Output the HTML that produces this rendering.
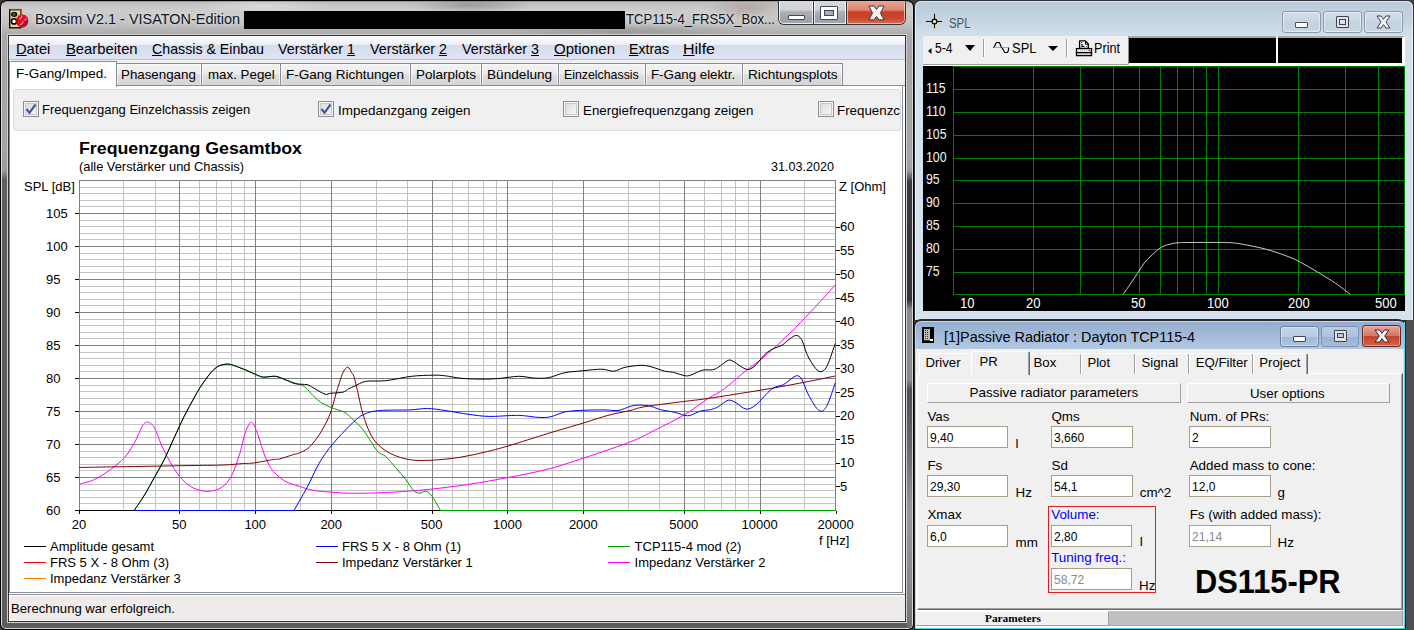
<!DOCTYPE html>
<html><head><meta charset="utf-8"><title>Boxsim</title>
<style>
html,body{margin:0;padding:0;width:1414px;height:630px;overflow:hidden;background:#3c3c3c}
.b{position:absolute;box-sizing:border-box}
.t{position:absolute;white-space:nowrap;line-height:1;font-family:"Liberation Sans", sans-serif;transform-origin:0 0}
svg{position:absolute;overflow:visible}
u{text-decoration:underline;text-underline-offset:1px}
</style></head><body>
<div class="b" style="left:0px;top:0px;width:914px;height:630px;background:#000;border-radius:7px 7px 6px 6px"></div><div class="b" style="left:1px;top:1px;width:912px;height:628px;background:linear-gradient(180deg,#bdbdbd 0px,#cdcdcd 8px,#c4c4c4 20px,#a9a9a9 34px,#a5a5a5 60px,#a3a3a3 150px,#9c9c9c 168px,#5f5f5f 178px,#5c5c5c 300px,#5d5d5d 629px);border:1px solid #d8d8d8;border-top-color:#9a9a9a;border-radius:6px 6px 5px 5px"></div><div class="b" style="left:907px;top:150px;width:5px;height:478px;background:linear-gradient(180deg,#a8a8a8 0px,#a0a0a0 20px,#3a3a3a 32px,#353535 150px,#8a8a8a 160px,#8a8a8a 230px,#505050 240px,#6a6a6a 300px,#999 360px,#888 440px,#707070 478px);border-radius:0 0 4px 0"></div><div class="b" style="left:1px;top:1px;width:912px;height:33px;background:radial-gradient(ellipse 60px 8px at 470px 4px,rgba(80,80,80,0.35),transparent),radial-gradient(ellipse 80px 7px at 260px 5px,rgba(255,255,255,0.35),transparent),radial-gradient(ellipse 40px 10px at 745px 8px,rgba(120,60,60,0.25),transparent),radial-gradient(ellipse 120px 8px at 620px 30px,rgba(90,90,90,0.25),transparent);border-radius:6px 6px 0 0"></div><div class="b" style="left:7px;top:34px;width:900px;height:589px;border:1px solid #d0d0d0"></div><div class="b" style="left:8px;top:35px;width:898px;height:587px;border:1px solid #333;background:#fff"></div><svg style="left:9px;top:9px" width="20" height="20" viewBox="0 0 20 20">
<rect x="0.7" y="0.6" width="11" height="18.2" fill="#e8d88e" stroke="#000" stroke-width="1.3"/>
<path d="M1 0.6H11.7V6" fill="none" stroke="#8a4010" stroke-width="1.3"/>
<ellipse cx="5.2" cy="5.3" rx="3.2" ry="2.6" fill="#111"/><path d="M3.8 4.8H6.2M3.8 6H6.2" stroke="#bbb" stroke-width="0.6"/>
<circle cx="5" cy="12.4" r="2.6" fill="#fff" stroke="#000" stroke-width="1.6"/>
<path d="M13 5.3 L16.5 6.2 L19 9 L19.3 12.5 L18 16 L15 18.3 L11.5 18.5 L8.5 16.5 L7 13 L7.5 9.5 L9.5 6.5Z" fill="#e0102c"/>
<path d="M19.3 12.5 L18 16 L15 18.3 L11.5 18.5 L14 14 L17.5 10Z" fill="#b0102a"/>
<g fill="#fff"><rect x="12.2" y="6.8" width="1" height="1"/><rect x="10.5" y="9.2" width="1" height="1"/><rect x="11.6" y="8.4" width="1" height="1"/><rect x="15.5" y="10.5" width="1" height="1"/><rect x="16.5" y="9.6" width="1" height="1"/><rect x="13.5" y="12.5" width="1" height="1"/><rect x="11.5" y="15" width="1" height="1"/><rect x="12.5" y="14" width="1" height="1"/></g>
<rect x="7.5" y="11.8" width="1" height="1" fill="#000"/>
</svg><div class="t" style="left:35px;top:10.80px;font-size:15px;color:#101828;transform:scaleX(0.9631);text-shadow:0 0 5px rgba(255,255,255,0.8)">Boxsim V2.1 - VISATON-Edition</div><div class="b" style="left:244px;top:11px;width:381px;height:18px;background:#000"></div><div class="t" style="left:626px;top:10.80px;font-size:15px;color:#101828;transform:scaleX(0.8732);text-shadow:0 0 5px rgba(255,255,255,0.8)">TCP115-4_FRS5X_Box...</div><div class="b" style="left:778px;top:0px;width:128px;height:25px;background:#33363d;border-radius:0 0 6px 6px"></div><div class="b" style="left:779px;top:0px;width:34px;height:24px;background:linear-gradient(180deg,#d8dadd 0px,#cfd1d4 10px,#abaeb3 12px,#9ea2aa 21px,#a8acb4 24px);border-radius:0 0 0 5px;box-shadow:inset 0 0 0 1px rgba(255,255,255,0.75)"></div><div class="b" style="left:814px;top:0px;width:32px;height:24px;background:linear-gradient(180deg,#d8dadd 0px,#cfd1d4 10px,#abaeb3 12px,#9ea2aa 21px,#a8acb4 24px);box-shadow:inset 0 0 0 1px rgba(255,255,255,0.75)"></div><div class="b" style="left:847px;top:0px;width:58px;height:24px;background:linear-gradient(180deg,#eba898 0px,#dc8672 10px,#c83f24 12px,#c84a30 19px,#d87058 24px);border-radius:0 0 5px 0;box-shadow:inset 0 0 0 1px rgba(255,210,200,0.7)"></div><div class="b" style="left:778px;top:0px;width:128px;height:1px;background:#000"></div><div class="b" style="left:788px;top:15px;width:17px;height:5px;background:#fff;border:1px solid #404860;border-radius:1px"></div><div class="b" style="left:820px;top:6px;width:18px;height:14px;border:1px solid #404860;background:#fff;border-radius:1px"></div><div class="b" style="left:824px;top:10px;width:10px;height:6px;border:1px solid #404860;background:#a9acb2"></div><svg style="left:868px;top:5px" width="17" height="16" viewBox="0 0 17 16"><path d="M1 1H6L8.5 4.5L11 1H16L12.5 8L16 14.8H11L8.5 11.5L6 14.8H1L4.5 8Z" fill="#f2f2f2" stroke="#3a4050" stroke-width="1" stroke-linejoin="round"/></svg><div class="b" style="left:9px;top:36px;width:896px;height:24px;background:linear-gradient(180deg,#fdfdfe 0px,#eceff7 9px,#d5daed 9px,#dfe4f3 23px);border-bottom:1px solid #b8bfd3"></div><div class="b" style="left:9px;top:60px;width:896px;height:25px;background:#f0f0f0"></div><div class="t" style="left:16px;top:42.13px;font-size:14.5px;color:#000;transform:scaleX(1.0133);"><u>D</u>atei</div><div class="t" style="left:66px;top:42.13px;font-size:14.5px;color:#000;transform:scaleX(1.0208);"><u>B</u>earbeiten</div><div class="t" style="left:152px;top:42.13px;font-size:14.5px;color:#000;transform:scaleX(0.9786);"><u>C</u>hassis &amp; Einbau</div><div class="t" style="left:278px;top:42.13px;font-size:14.5px;color:#000;transform:scaleX(0.9850);">Verstärker <u>1</u></div><div class="t" style="left:370px;top:42.13px;font-size:14.5px;color:#000;transform:scaleX(0.9850);">Verstärker <u>2</u></div><div class="t" style="left:462px;top:42.13px;font-size:14.5px;color:#000;transform:scaleX(0.9850);">Verstärker <u>3</u></div><div class="t" style="left:554px;top:42.13px;font-size:14.5px;color:#000;transform:scaleX(1.0365);"><u>O</u>ptionen</div><div class="t" style="left:629px;top:42.13px;font-size:14.5px;color:#000;transform:scaleX(0.9734);"><u>E</u>xtras</div><div class="t" style="left:683px;top:42.13px;font-size:14.5px;color:#000;transform:scaleX(1.1031);"><u>H</u>ilfe</div><div class="b" style="left:116px;top:63px;width:86px;height:23px;background:linear-gradient(180deg,#f3f3f3 0%,#ebebeb 45%,#dddddd 50%,#d5d5d5 100%);border:1px solid #8a8c93;border-bottom:none;box-shadow:inset 0 0 0 1px rgba(255,255,255,0.6)"></div><div class="t" style="left:120.5px;top:68.40px;font-size:13px;color:#000;transform:scaleX(1.0245);">Phasengang</div><div class="b" style="left:201px;top:63px;width:80px;height:23px;background:linear-gradient(180deg,#f3f3f3 0%,#ebebeb 45%,#dddddd 50%,#d5d5d5 100%);border:1px solid #8a8c93;border-bottom:none;box-shadow:inset 0 0 0 1px rgba(255,255,255,0.6)"></div><div class="t" style="left:208px;top:68.40px;font-size:13px;color:#000;transform:scaleX(1.0256);">max. Pegel</div><div class="b" style="left:280px;top:63px;width:131px;height:23px;background:linear-gradient(180deg,#f3f3f3 0%,#ebebeb 45%,#dddddd 50%,#d5d5d5 100%);border:1px solid #8a8c93;border-bottom:none;box-shadow:inset 0 0 0 1px rgba(255,255,255,0.6)"></div><div class="t" style="left:286px;top:68.40px;font-size:13px;color:#000;transform:scaleX(1.0409);">F-Gang Richtungen</div><div class="b" style="left:410px;top:63px;width:72px;height:23px;background:linear-gradient(180deg,#f3f3f3 0%,#ebebeb 45%,#dddddd 50%,#d5d5d5 100%);border:1px solid #8a8c93;border-bottom:none;box-shadow:inset 0 0 0 1px rgba(255,255,255,0.6)"></div><div class="t" style="left:416px;top:68.40px;font-size:13px;color:#000;transform:scaleX(1.0379);">Polarplots</div><div class="b" style="left:481px;top:63px;width:78px;height:23px;background:linear-gradient(180deg,#f3f3f3 0%,#ebebeb 45%,#dddddd 50%,#d5d5d5 100%);border:1px solid #8a8c93;border-bottom:none;box-shadow:inset 0 0 0 1px rgba(255,255,255,0.6)"></div><div class="t" style="left:487px;top:68.40px;font-size:13px;color:#000;transform:scaleX(1.0487);">Bündelung</div><div class="b" style="left:558px;top:63px;width:88px;height:23px;background:linear-gradient(180deg,#f3f3f3 0%,#ebebeb 45%,#dddddd 50%,#d5d5d5 100%);border:1px solid #8a8c93;border-bottom:none;box-shadow:inset 0 0 0 1px rgba(255,255,255,0.6)"></div><div class="t" style="left:564px;top:68.40px;font-size:13px;color:#000;transform:scaleX(0.9485);">Einzelchassis</div><div class="b" style="left:645px;top:63px;width:98px;height:23px;background:linear-gradient(180deg,#f3f3f3 0%,#ebebeb 45%,#dddddd 50%,#d5d5d5 100%);border:1px solid #8a8c93;border-bottom:none;box-shadow:inset 0 0 0 1px rgba(255,255,255,0.6)"></div><div class="t" style="left:651px;top:68.40px;font-size:13px;color:#000;transform:scaleX(1.0222);">F-Gang elektr.</div><div class="b" style="left:742px;top:63px;width:101px;height:23px;background:linear-gradient(180deg,#f3f3f3 0%,#ebebeb 45%,#dddddd 50%,#d5d5d5 100%);border:1px solid #8a8c93;border-bottom:none;box-shadow:inset 0 0 0 1px rgba(255,255,255,0.6)"></div><div class="t" style="left:748px;top:68.40px;font-size:13px;color:#000;transform:scaleX(1.0508);">Richtungsplots</div><div class="b" style="left:9px;top:85px;width:896px;height:1px;background:#8a8c93"></div><div class="b" style="left:9px;top:61px;width:108px;height:26px;background:#fff;border:1px solid #8a8c93;border-bottom:none"></div><div class="t" style="left:16px;top:67.00px;font-size:13px;color:#000;transform:scaleX(1.0409);">F-Gang/Imped.</div><div class="b" style="left:9px;top:86px;width:1px;height:507px;background:#8890a0"></div><div class="b" style="left:9px;top:592px;width:894px;height:1px;background:#8890a0"></div><div class="b" style="left:902px;top:86px;width:1px;height:507px;background:#8890a0"></div><div class="b" style="left:13px;top:89px;width:888px;height:42px;background:#f0f0f0;border:1px solid #d5dde6;border-radius:3px"></div><div class="b" style="left:23px;top:101px;width:16px;height:16px;background:linear-gradient(135deg,#d9d9d9,#fafafa);border:1px solid #8e8f8f;box-shadow:inset 0 0 0 1px #f4f4f4,inset 0 0 0 2px #c9c9c9"></div><svg style="left:23px;top:101px" width="16" height="16" viewBox="0 0 16 16"><path d="M3.5 8 L6.5 11.8 L12.5 3.5" fill="none" stroke="#3d58a6" stroke-width="2.2"/></svg><div class="t" style="left:42px;top:103.30px;font-size:13px;color:#000;">Frequenzgang Einzelchassis zeigen</div><div class="b" style="left:318px;top:101px;width:16px;height:16px;background:linear-gradient(135deg,#d9d9d9,#fafafa);border:1px solid #8e8f8f;box-shadow:inset 0 0 0 1px #f4f4f4,inset 0 0 0 2px #c9c9c9"></div><svg style="left:318px;top:101px" width="16" height="16" viewBox="0 0 16 16"><path d="M3.5 8 L6.5 11.8 L12.5 3.5" fill="none" stroke="#3d58a6" stroke-width="2.2"/></svg><div class="t" style="left:338px;top:103.50px;font-size:13px;color:#000;transform:scaleX(1.0365);">Impedanzgang zeigen</div><div class="b" style="left:563px;top:101px;width:16px;height:16px;background:linear-gradient(135deg,#d9d9d9,#fafafa);border:1px solid #8e8f8f;box-shadow:inset 0 0 0 1px #f4f4f4,inset 0 0 0 2px #c9c9c9"></div><div class="t" style="left:582.6px;top:103.50px;font-size:13px;color:#000;transform:scaleX(1.0250);">Energiefrequenzgang zeigen</div><div class="b" style="left:818px;top:101px;width:16px;height:16px;background:linear-gradient(135deg,#d9d9d9,#fafafa);border:1px solid #8e8f8f;box-shadow:inset 0 0 0 1px #f4f4f4,inset 0 0 0 2px #c9c9c9"></div><div style="position:absolute;left:830px;top:95px;width:70px;height:30px;overflow:hidden"><div class="t" style="left:7px;top:8.50px;font-size:13px;color:#000;transform:scaleX(1.0257);">Frequenzc</div></div><div class="b" style="left:903px;top:86px;width:2px;height:507px;background:#fff"></div><div class="t" style="left:79px;top:139.61px;font-size:17px;color:#000;font-weight:700;transform:scaleX(1.0446);">Frequenzgang Gesamtbox</div><div class="t" style="left:79px;top:160.00px;font-size:13px;color:#000;transform:scaleX(0.9886);">(alle Verstärker und Chassis)</div><div class="t" style="left:771px;top:160.00px;font-size:13px;color:#000;transform:scaleX(0.9683);">31.03.2020</div><div class="t" style="left:24px;top:180.00px;font-size:13px;color:#000;">SPL [dB]</div><div class="t" style="left:839px;top:180.00px;font-size:13px;color:#000;">Z [Ohm]</div><div class="b" style="left:9px;top:593px;width:896px;height:1px;background:#fff"></div><div class="b" style="left:9px;top:594px;width:896px;height:1px;background:#909090"></div><div class="b" style="left:9px;top:595px;width:896px;height:26px;background:#fff"></div><div class="b" style="left:10px;top:596px;width:895px;height:24px;background:#efebea"></div><div class="t" style="left:11px;top:602.00px;font-size:13px;color:#000;transform:scaleX(1.0086);">Berechnung war erfolgreich.</div><svg style="left:0;top:0" width="1414" height="630" viewBox="0 0 1414 630"><g shape-rendering="crispEdges" stroke-width="1"><path d="M79 503.5H836" stroke="#c4c4c4"/><path d="M79 497.5H836" stroke="#c4c4c4"/><path d="M79 490.5H836" stroke="#c4c4c4"/><path d="M79 484.5H836" stroke="#c4c4c4"/><path d="M79 470.5H836" stroke="#c4c4c4"/><path d="M79 464.5H836" stroke="#c4c4c4"/><path d="M79 457.5H836" stroke="#c4c4c4"/><path d="M79 451.5H836" stroke="#c4c4c4"/><path d="M79 437.5H836" stroke="#c4c4c4"/><path d="M79 431.5H836" stroke="#c4c4c4"/><path d="M79 424.5H836" stroke="#c4c4c4"/><path d="M79 418.5H836" stroke="#c4c4c4"/><path d="M79 404.5H836" stroke="#c4c4c4"/><path d="M79 398.5H836" stroke="#c4c4c4"/><path d="M79 391.5H836" stroke="#c4c4c4"/><path d="M79 385.5H836" stroke="#c4c4c4"/><path d="M79 371.5H836" stroke="#c4c4c4"/><path d="M79 365.5H836" stroke="#c4c4c4"/><path d="M79 358.5H836" stroke="#c4c4c4"/><path d="M79 352.5H836" stroke="#c4c4c4"/><path d="M79 338.5H836" stroke="#c4c4c4"/><path d="M79 332.5H836" stroke="#c4c4c4"/><path d="M79 325.5H836" stroke="#c4c4c4"/><path d="M79 319.5H836" stroke="#c4c4c4"/><path d="M79 305.5H836" stroke="#c4c4c4"/><path d="M79 299.5H836" stroke="#c4c4c4"/><path d="M79 292.5H836" stroke="#c4c4c4"/><path d="M79 286.5H836" stroke="#c4c4c4"/><path d="M79 272.5H836" stroke="#c4c4c4"/><path d="M79 266.5H836" stroke="#c4c4c4"/><path d="M79 259.5H836" stroke="#c4c4c4"/><path d="M79 253.5H836" stroke="#c4c4c4"/><path d="M79 239.5H836" stroke="#c4c4c4"/><path d="M79 233.5H836" stroke="#c4c4c4"/><path d="M79 226.5H836" stroke="#c4c4c4"/><path d="M79 220.5H836" stroke="#c4c4c4"/><path d="M79 206.5H836" stroke="#c4c4c4"/><path d="M79 200.5H836" stroke="#c4c4c4"/><path d="M79 193.5H836" stroke="#c4c4c4"/><path d="M79 187.5H836" stroke="#c4c4c4"/><path d="M123.5 180V510" stroke="#c4c4c4"/><path d="M155.5 180V510" stroke="#c4c4c4"/><path d="M199.5 180V510" stroke="#c4c4c4"/><path d="M216.5 180V510" stroke="#c4c4c4"/><path d="M231.5 180V510" stroke="#c4c4c4"/><path d="M244.5 180V510" stroke="#c4c4c4"/><path d="M300.5 180V510" stroke="#c4c4c4"/><path d="M376.5 180V510" stroke="#c4c4c4"/><path d="M407.5 180V510" stroke="#c4c4c4"/><path d="M452.5 180V510" stroke="#c4c4c4"/><path d="M468.5 180V510" stroke="#c4c4c4"/><path d="M483.5 180V510" stroke="#c4c4c4"/><path d="M496.5 180V510" stroke="#c4c4c4"/><path d="M552.5 180V510" stroke="#c4c4c4"/><path d="M628.5 180V510" stroke="#c4c4c4"/><path d="M659.5 180V510" stroke="#c4c4c4"/><path d="M704.5 180V510" stroke="#c4c4c4"/><path d="M721.5 180V510" stroke="#c4c4c4"/><path d="M735.5 180V510" stroke="#c4c4c4"/><path d="M748.5 180V510" stroke="#c4c4c4"/><path d="M804.5 180V510" stroke="#c4c4c4"/><path d="M79 477.5H836" stroke="#808080"/><path d="M79 444.5H836" stroke="#808080"/><path d="M79 411.5H836" stroke="#808080"/><path d="M79 378.5H836" stroke="#808080"/><path d="M79 345.5H836" stroke="#808080"/><path d="M79 312.5H836" stroke="#808080"/><path d="M79 279.5H836" stroke="#808080"/><path d="M79 246.5H836" stroke="#808080"/><path d="M79 213.5H836" stroke="#808080"/><path d="M255.5 180V510" stroke="#808080"/><path d="M331.5 180V510" stroke="#808080"/><path d="M507.5 180V510" stroke="#808080"/><path d="M684.5 180V510" stroke="#808080"/><path d="M583.5 180V510" stroke="#808080"/><path d="M760.5 180V510" stroke="#808080"/><path d="M179.5 180V510" stroke="#808080"/><path d="M432.5 180V510" stroke="#808080"/><path d="M79.5 180.5H835.5V510.5" fill="none" stroke="#808080"/><path d="M79.5 180V511" stroke="#808080"/><path d="M79 510.5H836" stroke="#000"/><path d="M75 510.5H79" stroke="#000"/><path d="M75 477.5H79" stroke="#000"/><path d="M75 444.5H79" stroke="#000"/><path d="M75 411.5H79" stroke="#000"/><path d="M75 378.5H79" stroke="#000"/><path d="M75 345.5H79" stroke="#000"/><path d="M75 312.5H79" stroke="#000"/><path d="M75 279.5H79" stroke="#000"/><path d="M75 246.5H79" stroke="#000"/><path d="M75 213.5H79" stroke="#000"/><path d="M836 486.5H840" stroke="#000"/><path d="M836 463.5H840" stroke="#000"/><path d="M836 439.5H840" stroke="#000"/><path d="M836 416.5H840" stroke="#000"/><path d="M836 392.5H840" stroke="#000"/><path d="M836 368.5H840" stroke="#000"/><path d="M836 345.5H840" stroke="#000"/><path d="M836 321.5H840" stroke="#000"/><path d="M836 298.5H840" stroke="#000"/><path d="M836 274.5H840" stroke="#000"/><path d="M836 250.5H840" stroke="#000"/><path d="M836 227.5H840" stroke="#000"/><path d="M79.5 511V514" stroke="#000"/><path d="M179.5 511V514" stroke="#000"/><path d="M255.5 511V514" stroke="#000"/><path d="M331.5 511V514" stroke="#000"/><path d="M432.5 511V514" stroke="#000"/><path d="M507.5 511V514" stroke="#000"/><path d="M583.5 511V514" stroke="#000"/><path d="M684.5 511V514" stroke="#000"/><path d="M760.5 511V514" stroke="#000"/><path d="M836.5 511V514" stroke="#000"/></g><g fill="none" stroke-width="1" stroke-linejoin="round"><path d="M440 510.5H835.5" stroke="#00a000" stroke-width="1" shape-rendering="crispEdges"/><path d="M134 510.5H294.5" stroke="#0000ff" stroke-width="1" shape-rendering="crispEdges"/><path d="M79.0 484.3 C81.5 483.5 89.7 481.8 94.8 479.4 C99.9 477.0 105.9 472.9 110.7 469.4 C115.5 465.9 120.8 461.8 124.6 457.5 C128.4 453.2 131.6 447.8 134.5 442.7 C137.4 437.6 140.3 429.1 142.5 425.8 C144.7 422.5 146.1 421.9 148.0 422.2 C149.9 422.5 152.1 423.8 154.4 427.8 C156.7 431.8 159.5 441.0 162.3 447.0 C165.1 453.0 169.0 460.3 172.2 465.5 C175.4 470.7 178.6 475.8 182.1 479.4 C185.6 483.0 189.9 486.4 194.0 488.3 C198.1 490.2 203.5 491.5 207.9 491.3 C212.3 491.1 218.0 489.8 221.8 487.3 C225.6 484.8 228.8 480.8 231.7 475.4 C234.6 470.0 237.5 460.6 239.7 453.6 C241.9 446.6 243.7 436.7 245.6 431.7 C247.5 426.7 249.7 421.9 251.6 422.2 C253.5 422.5 255.3 428.1 257.5 433.7 C259.7 439.3 263.0 451.5 265.5 457.5 C268.0 463.5 270.2 467.6 273.4 471.4 C276.6 475.2 281.2 478.9 285.3 481.3 C289.4 483.7 294.8 484.9 299.2 486.3 C303.6 487.7 307.7 489.3 313.1 490.3 C318.5 491.3 326.3 491.8 333.0 492.3 C339.7 492.8 345.9 493.3 355.0 493.3 C364.1 493.3 377.8 492.9 389.7 492.3 C401.6 491.7 416.7 490.6 429.4 489.3 C442.1 488.0 456.3 486.2 469.0 484.3 C481.7 482.4 496.0 479.8 508.7 477.4 C521.4 475.0 536.3 472.1 548.4 469.0 C560.5 465.9 571.0 462.2 584.1 457.9 C597.2 453.6 618.7 446.4 630.0 442.0 C641.3 437.6 646.1 434.6 654.8 430.2 C663.5 425.8 675.9 419.8 684.5 414.7 C693.1 409.6 701.9 402.5 708.3 398.4 C714.7 394.3 718.5 393.1 724.2 388.9 C729.9 384.7 738.3 376.8 744.0 372.2 C749.7 367.6 754.8 364.4 759.9 360.3 C765.0 356.2 770.1 351.6 775.8 346.4 C781.5 341.2 789.2 334.0 795.6 327.6 C802.0 321.2 809.1 313.5 815.5 306.7 C821.9 299.9 832.1 288.4 835.3 284.9" stroke="#ff00ff"/><path d="M79.0 467.5 C87.9 467.3 116.1 466.8 134.5 466.5 C152.9 466.2 179.7 465.7 194.0 465.5 C208.3 465.3 215.8 465.3 223.8 465.0 C231.8 464.7 238.9 463.8 243.7 463.5 C248.5 463.2 248.8 463.6 253.6 463.0 C258.4 462.4 269.3 460.1 273.4 459.5 C277.5 458.9 276.2 459.8 279.4 459.0 C282.6 458.2 290.1 455.6 293.3 454.6 C296.5 453.6 296.7 454.2 299.2 453.0 C301.7 451.8 305.9 450.3 309.1 447.4 C312.3 444.5 316.1 439.2 319.0 435.0 C321.9 430.8 324.9 425.3 327.0 421.0 C329.1 416.7 330.4 412.9 332.0 408.0 C333.6 403.1 335.2 396.2 336.9 390.6 C338.6 385.0 341.2 376.5 342.9 372.8 C344.6 369.1 346.4 367.2 347.8 367.2 C349.2 367.2 350.8 371.3 351.8 372.8 C352.8 374.3 353.0 373.5 354.0 376.7 C355.0 379.9 356.6 387.2 357.9 392.6 C359.2 398.0 360.3 404.8 361.9 410.5 C363.5 416.2 365.7 423.2 367.9 428.3 C370.1 433.4 372.3 438.2 375.8 442.2 C379.3 446.2 384.3 450.3 389.7 453.1 C395.1 455.9 402.5 458.6 409.5 459.7 C416.5 460.8 425.0 460.5 433.3 460.1 C441.6 459.7 452.8 458.4 461.1 457.1 C469.4 455.8 477.3 453.9 484.9 452.1 C492.5 450.3 498.5 448.8 508.7 445.8 C518.9 442.8 536.3 437.0 548.4 433.3 C560.5 429.6 574.6 425.7 584.1 422.8 C593.6 419.9 600.6 417.4 607.9 415.4 C615.2 413.4 624.1 411.9 630.0 410.5 C635.9 409.1 636.1 408.2 644.8 406.7 C653.5 405.2 674.3 402.7 684.5 401.4 C694.7 400.1 696.2 400.2 708.3 398.4 C720.4 396.6 745.3 392.7 759.9 390.3 C774.5 387.9 787.5 385.5 799.6 383.2 C811.7 380.9 829.6 377.2 835.3 376.0" stroke="#800000"/><path d="M134.5 510.0 C136.1 507.6 141.2 500.4 144.4 495.2 C147.6 490.0 151.2 483.1 154.4 477.4 C157.6 471.7 161.1 465.9 164.3 459.5 C167.5 453.1 171.0 444.6 174.2 437.7 C177.4 430.8 180.9 422.9 184.1 416.5 C187.3 410.1 191.5 402.6 194.0 398.0 C196.5 393.4 197.5 391.6 200.0 387.7 C202.5 383.8 207.0 377.2 209.9 373.8 C212.8 370.4 215.4 367.9 217.9 366.4 C220.4 364.9 223.6 364.5 225.8 364.2 C228.0 363.9 228.8 364.0 231.7 364.8 C234.6 365.6 239.9 367.7 243.7 369.2 C247.5 370.7 252.4 373.1 255.6 374.4 C258.8 375.7 260.3 376.8 263.5 377.1 C266.7 377.4 271.9 375.9 275.4 376.3 C278.9 376.7 282.1 378.6 285.3 379.7 C288.5 380.8 292.7 382.4 295.2 383.2 C297.7 384.0 299.2 384.2 301.0 385.0 C302.8 385.8 304.3 386.3 306.2 388.0 C308.1 389.7 310.7 393.3 313.1 395.6 C315.5 397.9 318.1 400.6 321.0 402.5 C323.9 404.4 327.2 405.9 331.0 407.5 C334.8 409.1 341.2 410.4 344.8 412.5 C348.4 414.6 351.1 417.9 353.8 420.4 C356.5 422.9 359.3 425.2 361.9 428.3 C364.5 431.4 367.3 436.0 369.8 439.7 C372.3 443.4 375.3 448.9 377.8 451.6 C380.3 454.3 382.9 454.0 385.7 456.5 C388.5 459.0 392.4 463.8 395.6 467.5 C398.8 471.2 402.7 475.8 405.6 479.4 C408.5 483.0 411.3 488.1 413.5 490.3 C415.7 492.5 417.5 493.1 419.4 493.3 C421.3 493.5 423.5 491.0 425.4 491.3 C427.3 491.6 428.9 492.2 431.3 495.2 C433.7 498.2 438.9 507.6 440.3 510.0" stroke="#00a000"/><path d="M294.2 510.0 C296.3 506.4 303.1 494.7 307.1 487.3 C311.1 479.9 314.9 470.5 319.0 463.5 C323.1 456.5 327.2 450.6 333.0 443.7 C338.8 436.8 349.7 425.4 355.0 420.6 C360.3 415.8 361.9 415.1 365.9 413.5 C369.9 411.9 372.8 411.1 379.8 410.5 C386.8 409.9 401.9 410.2 409.5 409.9 C417.1 409.6 421.7 408.4 427.4 408.5 C433.1 408.6 438.5 409.6 445.2 410.5 C451.9 411.4 462.0 413.5 469.0 414.4 C476.0 415.3 480.9 416.2 488.9 416.4 C496.9 416.6 510.8 415.2 518.7 415.4 C526.6 415.6 533.4 417.2 538.5 417.4 C543.6 417.6 546.3 417.6 550.4 416.8 C554.5 416.0 559.9 413.1 564.3 412.1 C568.7 411.1 571.8 410.9 578.2 410.5 C584.6 410.1 597.6 409.9 604.0 409.9 C610.4 409.9 613.7 411.0 617.9 410.5 C622.1 410.0 627.0 407.3 630.0 406.5 C633.0 405.7 633.9 405.3 636.9 405.2 C639.9 405.1 645.0 405.1 648.8 405.8 C652.6 406.5 656.6 408.7 660.7 409.7 C664.8 410.7 670.8 411.4 674.6 412.3 C678.4 413.2 682.0 414.8 684.5 415.3 C687.0 415.8 688.0 416.0 690.5 415.3 C693.0 414.6 697.2 412.0 700.4 411.1 C703.6 410.2 707.4 410.4 710.3 409.7 C713.2 409.0 715.4 408.2 718.3 406.7 C721.2 405.2 725.4 400.8 728.2 400.2 C731.0 399.6 733.3 401.4 736.1 402.8 C738.9 404.2 742.8 408.8 746.0 409.1 C749.2 409.4 751.9 408.0 756.0 404.8 C760.1 401.6 767.4 392.1 771.8 388.9 C776.2 385.7 779.9 386.6 783.7 384.5 C787.5 382.4 792.7 376.9 795.6 376.0 C798.5 375.1 799.7 376.3 801.6 379.0 C803.5 381.7 805.3 388.5 807.5 392.9 C809.7 397.3 813.3 403.8 815.5 406.7 C817.7 409.6 819.5 411.6 821.4 411.3 C823.3 411.0 825.2 409.3 827.4 404.8 C829.6 400.3 834.0 386.4 835.3 382.9" stroke="#0000ff"/><path d="M134.5 510.0 C136.1 507.6 141.2 500.4 144.4 495.2 C147.6 490.0 151.2 483.1 154.4 477.4 C157.6 471.7 161.1 465.9 164.3 459.5 C167.5 453.1 171.0 444.6 174.2 437.7 C177.4 430.8 180.9 422.9 184.1 416.5 C187.3 410.1 191.5 402.6 194.0 398.0 C196.5 393.4 197.5 391.6 200.0 387.7 C202.5 383.8 207.0 377.2 209.9 373.8 C212.8 370.4 215.4 367.9 217.9 366.4 C220.4 364.9 223.6 364.5 225.8 364.2 C228.0 363.9 228.8 364.0 231.7 364.8 C234.6 365.6 239.9 367.7 243.7 369.2 C247.5 370.7 252.4 373.1 255.6 374.4 C258.8 375.7 260.3 376.8 263.5 377.1 C266.7 377.4 271.9 375.9 275.4 376.3 C278.9 376.7 282.1 378.5 285.3 379.7 C288.5 380.9 291.7 382.9 295.2 383.7 C298.7 384.5 304.2 384.1 307.1 384.7 C310.0 385.3 310.2 386.2 313.1 387.7 C316.0 389.2 322.1 393.3 325.0 394.2 C327.9 395.1 328.1 393.5 331.0 393.2 C333.9 392.9 340.1 392.9 342.9 392.2 C345.7 391.5 346.9 389.7 348.8 388.7 C350.7 387.7 352.3 387.2 355.0 386.0 C357.7 384.8 361.0 382.1 365.9 381.3 C370.8 380.5 378.4 381.5 385.7 380.7 C393.0 379.9 403.9 377.2 411.5 376.3 C419.1 375.4 427.9 375.3 433.3 375.2 C438.7 375.1 440.8 375.3 445.2 375.8 C449.6 376.3 455.7 377.8 461.1 378.3 C466.5 378.8 473.3 379.0 479.0 379.1 C484.7 379.2 490.4 379.1 496.8 378.7 C503.2 378.3 512.7 376.4 518.7 376.3 C524.7 376.2 529.7 377.9 534.5 378.1 C539.3 378.3 543.6 378.5 548.4 377.7 C553.2 376.9 558.9 373.9 564.3 372.8 C569.7 371.7 576.1 371.4 582.1 370.8 C588.1 370.2 596.9 369.1 602.0 369.2 C607.1 369.3 610.2 371.5 613.9 371.2 C617.6 370.9 620.7 368.2 625.0 367.3 C629.3 366.4 636.8 365.4 640.9 365.3 C645.0 365.2 647.0 365.8 650.8 366.7 C654.6 367.6 661.2 370.3 664.7 371.2 C668.2 372.1 669.4 371.5 672.6 372.2 C675.8 372.9 681.6 375.1 684.5 375.6 C687.4 376.1 687.6 376.1 690.5 375.2 C693.4 374.3 698.9 371.1 702.4 370.2 C705.9 369.3 709.8 370.3 712.3 369.8 C714.8 369.3 715.8 368.8 718.3 367.3 C720.8 365.8 725.7 361.2 728.2 360.3 C730.7 359.4 731.3 360.5 734.1 361.9 C736.9 363.3 742.8 368.4 746.0 369.2 C749.2 370.0 751.1 368.9 754.0 366.7 C756.9 364.5 761.1 358.2 763.9 355.4 C766.7 352.6 769.0 351.0 771.8 349.4 C774.6 347.8 779.2 346.8 781.7 345.4 C784.2 344.0 785.5 342.1 787.7 340.5 C789.9 338.9 793.4 335.7 795.6 335.5 C797.8 335.3 799.7 336.3 801.6 339.5 C803.5 342.7 805.3 350.8 807.5 355.4 C809.7 360.0 813.3 365.7 815.5 368.3 C817.7 370.9 819.5 372.1 821.4 371.6 C823.3 371.1 825.2 369.8 827.4 365.3 C829.6 360.8 834.0 347.0 835.3 343.5" stroke="#000"/><path d="M79 510.5H135" stroke="#000" stroke-width="1" shape-rendering="crispEdges"/></g><path d="M24 546.5H46" stroke="#000" shape-rendering="crispEdges"/><path d="M316 546.5H338" stroke="#0000ff" shape-rendering="crispEdges"/><path d="M608 546.5H630" stroke="#00a000" shape-rendering="crispEdges"/><path d="M24 562.5H46" stroke="#ff0000" shape-rendering="crispEdges"/><path d="M316 562.5H338" stroke="#800000" shape-rendering="crispEdges"/><path d="M608 562.5H630" stroke="#ff00ff" shape-rendering="crispEdges"/><path d="M24 578.5H46" stroke="#ff8000" shape-rendering="crispEdges"/></svg><div class="t" style="left:46px;top:503.50px;font-size:13px;color:#000;">60</div><div class="t" style="left:46px;top:470.50px;font-size:13px;color:#000;">65</div><div class="t" style="left:46px;top:437.50px;font-size:13px;color:#000;">70</div><div class="t" style="left:46px;top:404.50px;font-size:13px;color:#000;">75</div><div class="t" style="left:46px;top:371.50px;font-size:13px;color:#000;">80</div><div class="t" style="left:46px;top:338.50px;font-size:13px;color:#000;">85</div><div class="t" style="left:46px;top:305.50px;font-size:13px;color:#000;">90</div><div class="t" style="left:46px;top:272.50px;font-size:13px;color:#000;">95</div><div class="t" style="left:46px;top:239.50px;font-size:13px;color:#000;">100</div><div class="t" style="left:46px;top:206.50px;font-size:13px;color:#000;">105</div><div class="t" style="left:840px;top:479.90px;font-size:13px;color:#000;">5</div><div class="t" style="left:840px;top:456.30px;font-size:13px;color:#000;">10</div><div class="t" style="left:840px;top:432.70px;font-size:13px;color:#000;">15</div><div class="t" style="left:840px;top:409.10px;font-size:13px;color:#000;">20</div><div class="t" style="left:840px;top:385.50px;font-size:13px;color:#000;">25</div><div class="t" style="left:840px;top:361.90px;font-size:13px;color:#000;">30</div><div class="t" style="left:840px;top:338.30px;font-size:13px;color:#000;">35</div><div class="t" style="left:840px;top:314.70px;font-size:13px;color:#000;">40</div><div class="t" style="left:840px;top:291.10px;font-size:13px;color:#000;">45</div><div class="t" style="left:840px;top:267.50px;font-size:13px;color:#000;">50</div><div class="t" style="left:840px;top:243.90px;font-size:13px;color:#000;">55</div><div class="t" style="left:840px;top:220.30px;font-size:13px;color:#000;">60</div><div class="t" style="left:71.8px;top:518.00px;font-size:13px;color:#000;">20</div><div class="t" style="left:172.1px;top:518.00px;font-size:13px;color:#000;">50</div><div class="t" style="left:244.4px;top:518.00px;font-size:13px;color:#000;">100</div><div class="t" style="left:320.4px;top:518.00px;font-size:13px;color:#000;">200</div><div class="t" style="left:420.7px;top:518.00px;font-size:13px;color:#000;">500</div><div class="t" style="left:493.0px;top:518.00px;font-size:13px;color:#000;">1000</div><div class="t" style="left:568.9px;top:518.00px;font-size:13px;color:#000;">2000</div><div class="t" style="left:669.3px;top:518.00px;font-size:13px;color:#000;">5000</div><div class="t" style="left:741.6px;top:518.00px;font-size:13px;color:#000;">10000</div><div class="t" style="left:817.5px;top:518.00px;font-size:13px;color:#000;">20000</div><div class="t" style="left:819px;top:533.50px;font-size:13px;color:#000;">f [Hz]</div><div class="t" style="left:50px;top:540.00px;font-size:13px;color:#000;">Amplitude gesamt</div><div class="t" style="left:342px;top:540.00px;font-size:13px;color:#000;">FRS 5 X - 8 Ohm (1)</div><div class="t" style="left:634.6px;top:540.00px;font-size:13px;color:#000;">TCP115-4 mod (2)</div><div class="t" style="left:50px;top:556.00px;font-size:13px;color:#000;">FRS 5 X - 8 Ohm (3)</div><div class="t" style="left:342px;top:556.00px;font-size:13px;color:#000;">Impedanz Verstärker 1</div><div class="t" style="left:634.6px;top:556.00px;font-size:13px;color:#000;">Impedanz Verstärker 2</div><div class="t" style="left:50px;top:572.00px;font-size:13px;color:#000;">Impedanz Verstärker 3</div><div class="b" style="left:914px;top:0px;width:500px;height:321px;background:linear-gradient(180deg,#bccbda 0px,#c6d4e2 20px,#d4e0ec 36px,#d6e2ee 100%);border:1px solid #2e3238;border-radius:7px 7px 0 0"></div><div class="b" style="left:915px;top:1px;width:498px;height:319px;border:1px solid rgba(255,255,255,0.55);border-radius:6px 6px 0 0;border-bottom:none"></div><svg style="left:925px;top:12px" width="18" height="18" viewBox="0 0 18 18"><g shape-rendering="crispEdges" stroke="#000" stroke-width="1"><path d="M9.5 1.5V16.5M1 9.5H17"/></g><circle cx="9.5" cy="9.5" r="2.4" fill="#e8d060" stroke="#000" stroke-width="1.1"/><circle cx="9.5" cy="9.5" r="1" fill="#fff" opacity="0.7"/><g fill="#c8b020"><rect x="9" y="1" width="1" height="1"/><rect x="9" y="16" width="1" height="1"/></g></svg><div class="t" style="left:949px;top:15.10px;font-size:15px;color:#4a5560;transform:scaleX(0.7583);">SPL</div><div class="b" style="left:1282px;top:11px;width:39px;height:22px;background:linear-gradient(180deg,#d2dde8,#c9d6e3 50%,#c3d1df 51%,#cad7e5);border:1px solid #8d9bb0;border-radius:3px;box-shadow:inset 0 0 0 1px rgba(255,255,255,0.45)"></div><div class="b" style="left:1323px;top:11px;width:39px;height:22px;background:linear-gradient(180deg,#d2dde8,#c9d6e3 50%,#c3d1df 51%,#cad7e5);border:1px solid #8d9bb0;border-radius:3px;box-shadow:inset 0 0 0 1px rgba(255,255,255,0.45)"></div><div class="b" style="left:1364px;top:11px;width:39px;height:22px;background:linear-gradient(180deg,#d2dde8,#c9d6e3 50%,#c3d1df 51%,#cad7e5);border:1px solid #8d9bb0;border-radius:3px;box-shadow:inset 0 0 0 1px rgba(255,255,255,0.45)"></div><div class="b" style="left:1295px;top:22px;width:13px;height:6px;background:#fafafa;border:1px solid #4a5060;border-radius:1px"></div><div class="b" style="left:1336px;top:16px;width:13px;height:12px;background:#e2e2e2;border:1px solid #3e4454;border-radius:1px"></div><div class="b" style="left:1339px;top:19px;width:7px;height:6px;background:#d6e6f4;border:1px solid #3e4454"></div><svg style="left:1376px;top:15px" width="15" height="14" viewBox="0 0 15 14"><path d="M1 1H5.2L7.5 4.3L9.8 1H14L10 7L14 13H9.8L7.5 9.7L5.2 13H1L5 7Z" fill="#f4f4f4" stroke="#3e4454" stroke-width="1" stroke-linejoin="round"/></svg><div class="b" style="left:923px;top:36px;width:482px;height:29px;background:#f0f0f0"></div><div class="b" style="left:923px;top:64px;width:205px;height:1px;background:#a0a0a0"></div><div class="b" style="left:923px;top:65px;width:482px;height:1px;background:#fff"></div><svg style="left:928px;top:48px" width="4" height="6" viewBox="0 0 4 6"><path d="M3.5 0V6L0 3Z" fill="#000"/></svg><div class="t" style="left:935px;top:40.95px;font-size:14px;color:#000;transform:scaleX(0.8648);">5-4</div><svg style="left:965px;top:45px" width="10" height="6" viewBox="0 0 10 6"><path d="M0 0H10L5 6Z" fill="#000"/></svg><div class="b" style="left:983px;top:39px;width:1px;height:18px;background:#a0a0a0"></div><div class="b" style="left:984px;top:39px;width:1px;height:18px;background:#fff"></div><svg style="left:992px;top:41px" width="18" height="13" viewBox="0 0 18 13"><path d="M1.3 6.6 L2.6 5.6 L3.4 3.2 L4.5 1.5 H7.2 L8.2 3.2 L9 5.6 L10.2 7 L11.2 8.6 L12 10.3 L12.8 11.5 H15.3 L16.2 10.2 L16.6 8 V6.5" fill="none" stroke="#000" stroke-width="1.15" stroke-linejoin="round"/><path d="M3 6.5H9M11 6.5H16.5" stroke="#777" stroke-width="0.6"/></svg><div class="t" style="left:1011.5px;top:40.95px;font-size:14px;color:#000;transform:scaleX(0.9258);">SPL</div><svg style="left:1048px;top:46px" width="10" height="5" viewBox="0 0 10 5"><path d="M0 0H10L5 5Z" fill="#000"/></svg><div class="b" style="left:1066px;top:39px;width:1px;height:18px;background:#a0a0a0"></div><div class="b" style="left:1067px;top:39px;width:1px;height:18px;background:#fff"></div><svg style="left:1075px;top:40px" width="18" height="17" viewBox="0 0 18 17">
<path d="M4.6 0.9H10.4L13.3 4V8.5H4.6Z" fill="#fff" stroke="#000" stroke-width="1.3" stroke-linejoin="round"/>
<path d="M10.4 1V4.2H13" fill="none" stroke="#000" stroke-width="1"/>
<path d="M6.3 2.6H7.2M6.3 4.6H7.8M6.3 6.4H9.5M11.5 6.4H12" stroke="#000" stroke-width="1.1"/>
<rect x="1.5" y="8.6" width="15" height="4" fill="#fff" stroke="#000" stroke-width="1.3"/>
<path d="M3 10.6H14" stroke="#aaa" stroke-width="1" stroke-dasharray="1 1"/>
<circle cx="14.5" cy="10.5" r="0.8" fill="#f00"/>
<rect x="1.5" y="12.6" width="15" height="3" fill="#d8d8d8" stroke="#000" stroke-width="1.3"/>
</svg><div class="t" style="left:1094px;top:40.95px;font-size:14px;color:#000;transform:scaleX(0.9032);">Print</div><div class="b" style="left:1128px;top:36px;width:148px;height:30px;background:#000;border-left:1px solid #8a8a8a;border-top:2px solid #a8a8a8;border-bottom:3px solid #fff"></div><div class="b" style="left:1276px;top:36px;width:2px;height:30px;background:#fff"></div><div class="b" style="left:1278px;top:36px;width:127px;height:30px;background:#000;border-top:2px solid #a8a8a8;border-bottom:3px solid #fff;border-right:3px solid #fff"></div><div class="b" style="left:923px;top:66px;width:482px;height:245px;background:#000"></div><svg style="left:0;top:0" width="1414" height="630"><g shape-rendering="crispEdges" stroke="#008000"><path d="M953 272.5H1405"/><path d="M953 249.5H1405"/><path d="M953 226.5H1405"/><path d="M953 203.5H1405"/><path d="M953 180.5H1405"/><path d="M953 158.5H1405"/><path d="M953 135.5H1405"/><path d="M953 112.5H1405"/><path d="M953 89.5H1405"/><path d="M1033.5 67V295"/><path d="M1080.5 67V295"/><path d="M1113.5 67V295"/><path d="M1139.5 67V295"/><path d="M1160.5 67V295"/><path d="M1177.5 67V295"/><path d="M1193.5 67V295"/><path d="M1206.5 67V295"/><path d="M1218.5 67V295"/><path d="M1298.5 67V295"/><path d="M1345.5 67V295"/><path d="M1378.5 67V295"/><path d="M953.5 66.5H1404.5V294.5H953.5Z" fill="none"/></g><path d="M1123.0 294.5 C1124.3 292.7 1128.4 286.8 1131.0 283.0 C1133.6 279.2 1136.9 274.2 1139.0 271.0 C1141.1 267.8 1142.5 265.2 1144.4 262.8 C1146.3 260.4 1148.8 258.1 1151.0 256.0 C1153.2 253.9 1156.2 251.0 1158.3 249.4 C1160.4 247.8 1162.3 246.8 1164.0 246.0 C1165.7 245.2 1166.8 244.9 1169.0 244.4 C1171.2 243.9 1174.6 243.1 1178.0 242.8 C1181.4 242.5 1182.4 242.5 1190.0 242.5 C1197.6 242.5 1217.8 242.3 1225.6 242.5 C1233.4 242.7 1234.7 243.0 1239.0 243.6 C1243.3 244.2 1247.8 245.2 1252.2 246.1 C1256.6 247.0 1261.4 247.9 1266.7 249.4 C1272.0 250.9 1280.5 253.7 1285.6 255.6 C1290.7 257.5 1293.1 258.4 1298.3 261.1 C1303.5 263.8 1311.8 268.6 1317.8 272.2 C1323.8 275.8 1330.4 279.8 1335.6 283.3 C1340.8 286.8 1347.7 292.5 1350.0 294.2" fill="none" stroke="#e0e0e0" stroke-width="0.9"/></svg><div class="t" style="left:925.5px;top:263.65px;font-size:14px;color:#f4f4f4;transform:scaleX(0.8800);">75</div><div class="t" style="left:925.5px;top:240.65px;font-size:14px;color:#f4f4f4;transform:scaleX(0.8800);">80</div><div class="t" style="left:925.5px;top:217.65px;font-size:14px;color:#f4f4f4;transform:scaleX(0.8800);">85</div><div class="t" style="left:925.5px;top:194.65px;font-size:14px;color:#f4f4f4;transform:scaleX(0.8800);">90</div><div class="t" style="left:925.5px;top:171.65px;font-size:14px;color:#f4f4f4;transform:scaleX(0.8800);">95</div><div class="t" style="left:925.5px;top:149.65px;font-size:14px;color:#f4f4f4;transform:scaleX(0.8800);">100</div><div class="t" style="left:925.5px;top:126.65px;font-size:14px;color:#f4f4f4;transform:scaleX(0.8800);">105</div><div class="t" style="left:925.5px;top:103.65px;font-size:14px;color:#f4f4f4;transform:scaleX(0.8800);">110</div><div class="t" style="left:925.5px;top:80.65px;font-size:14px;color:#f4f4f4;transform:scaleX(0.8800);">115</div><div class="t" style="left:960px;top:296.15px;font-size:14px;color:#fff;transform:scaleX(0.9300);">10</div><div class="t" style="left:1026px;top:296.15px;font-size:14px;color:#fff;transform:scaleX(0.9300);">20</div><div class="t" style="left:1131px;top:296.15px;font-size:14px;color:#fff;transform:scaleX(0.9300);">50</div><div class="t" style="left:1207px;top:296.15px;font-size:14px;color:#fff;transform:scaleX(0.9300);">100</div><div class="t" style="left:1288px;top:296.15px;font-size:14px;color:#fff;transform:scaleX(0.9300);">200</div><div class="t" style="left:1375px;top:296.15px;font-size:14px;color:#fff;transform:scaleX(0.9300);">500</div><div class="b" style="left:1405px;top:320px;width:9px;height:310px;background:#4f4f4f;border-left:1px solid #111"></div><div class="b" style="left:914px;top:319px;width:491px;height:311px;background:#2a2a2a;border-radius:7px 7px 0 0"></div><div class="b" style="left:915px;top:321px;width:490px;height:309px;background:linear-gradient(180deg,#93adcf 0px,#a2bad8 12px,#b2c9e2 28px,#f0f0f0 28px);border-radius:6px 6px 0 0;border:1px solid #c4d8ec;border-bottom:none"></div><svg style="left:922px;top:327px" width="13" height="16" viewBox="0 0 13 16" shape-rendering="crispEdges">
<rect x="0" y="0" width="12" height="16" fill="#000"/>
<rect x="2" y="2" width="6" height="12" fill="#bbb"/>
<path d="M3 3h1M5 3h1M3 5h1M5 5h1M3 7h1M5 7h1M3 9h1M5 9h1M3 11h1M5 11h1M2 13h8" stroke="#333"/>
<rect x="8" y="12" width="3" height="2" fill="#fff"/>
</svg><div class="t" style="left:943.5px;top:328.80px;font-size:15px;color:#000;transform:scaleX(0.9608);">[1]Passive Radiator : Dayton TCP115-4</div><div class="b" style="left:1280px;top:326px;width:39px;height:21px;background:linear-gradient(180deg,#c3d5ea,#b8cce4 50%,#9fb8d6 51%,#aec4de);border:1px solid #6b7f9e;border-radius:3px;box-shadow:inset 0 0 0 1px rgba(255,255,255,0.4)"></div><div class="b" style="left:1321px;top:326px;width:38px;height:21px;background:linear-gradient(180deg,#b6cbe3,#adc3df 50%,#98b2d3 51%,#a4bcda);border:1px solid #7f93b0;border-radius:3px"></div><div class="b" style="left:1362px;top:325px;width:39px;height:22px;background:linear-gradient(180deg,#e9a596,#d8725e 50%,#c3432d 51%,#d46048);border:1px solid #5f2a20;border-radius:3px;box-shadow:inset 0 0 0 1px rgba(255,200,190,0.5)"></div><div class="b" style="left:1293px;top:336px;width:13px;height:6px;background:#fafafa;border:1px solid #3e4656;border-radius:1px"></div><div class="b" style="left:1334px;top:330px;width:13px;height:12px;background:#e2e2e2;border:1px solid #3e4454;border-radius:1px"></div><div class="b" style="left:1337px;top:333px;width:7px;height:5px;background:#b8cce4;border:1px solid #3e4454"></div><svg style="left:1374px;top:329px" width="16" height="14" viewBox="0 0 16 14"><path d="M1 1H5.5L8 4.3L10.5 1H15L10.7 7L15 13H10.5L8 9.7L5.5 13H1L5.3 7Z" fill="#f4f4f4" stroke="#3a2a2a" stroke-width="1" stroke-linejoin="round"/></svg><div class="b" style="left:916px;top:349px;width:488px;height:261px;background:#f0f0f0"></div><div class="b" style="left:917px;top:373px;width:486px;height:237px;border-left:1px solid #fff;border-top:1px solid #fff;border-right:1px solid #696969;border-bottom:1px solid #696969;box-shadow:inset -1px -1px 0 #a0a0a0"></div><div class="b" style="left:919px;top:353px;width:54px;height:21px;border-left:1px solid #fff;border-top:1px solid #fff;border-right:1px solid #696969;box-shadow:inset -1px 0 0 #a0a0a0;border-radius:2px 2px 0 0;background:#f0f0f0"></div><div class="t" style="left:925.4px;top:356.43px;font-size:13.2px;color:#000;">Driver</div><div class="b" style="left:1029px;top:353px;width:53px;height:21px;border-left:1px solid #fff;border-top:1px solid #fff;border-right:1px solid #696969;box-shadow:inset -1px 0 0 #a0a0a0;border-radius:2px 2px 0 0;background:#f0f0f0"></div><div class="t" style="left:1033.5px;top:356.43px;font-size:13.2px;color:#000;">Box</div><div class="b" style="left:1081px;top:353px;width:55px;height:21px;border-left:1px solid #fff;border-top:1px solid #fff;border-right:1px solid #696969;box-shadow:inset -1px 0 0 #a0a0a0;border-radius:2px 2px 0 0;background:#f0f0f0"></div><div class="t" style="left:1087.4px;top:356.43px;font-size:13.2px;color:#000;">Plot</div><div class="b" style="left:1135px;top:353px;width:55px;height:21px;border-left:1px solid #fff;border-top:1px solid #fff;border-right:1px solid #696969;box-shadow:inset -1px 0 0 #a0a0a0;border-radius:2px 2px 0 0;background:#f0f0f0"></div><div class="t" style="left:1141.5px;top:356.43px;font-size:13.2px;color:#000;">Signal</div><div class="b" style="left:1189px;top:353px;width:65px;height:21px;border-left:1px solid #fff;border-top:1px solid #fff;border-right:1px solid #696969;box-shadow:inset -1px 0 0 #a0a0a0;border-radius:2px 2px 0 0;background:#f0f0f0"></div><div class="t" style="left:1195.7px;top:356.43px;font-size:13.2px;color:#000;">EQ/Filter</div><div class="b" style="left:1253px;top:353px;width:55px;height:21px;border-left:1px solid #fff;border-top:1px solid #fff;border-right:1px solid #696969;box-shadow:inset -1px 0 0 #a0a0a0;border-radius:2px 2px 0 0;background:#f0f0f0"></div><div class="t" style="left:1259.3px;top:356.43px;font-size:13.2px;color:#000;">Project</div><div class="b" style="left:971px;top:351px;width:59px;height:24px;border-left:1px solid #fff;border-top:1px solid #fff;border-right:1px solid #696969;box-shadow:inset -1px 0 0 #a0a0a0;border-radius:2px 2px 0 0;background:#f0f0f0"></div><div class="t" style="left:979.5px;top:354.83px;font-size:13.2px;color:#000;">PR</div><div class="b" style="left:927px;top:383px;width:254px;height:20px;border-left:1px solid #fff;border-top:1px solid #fff;border-right:1px solid #a0a0a0;border-bottom:1px solid #a0a0a0"></div><div class="t" style="left:969.4px;top:386.27px;font-size:13.5px;color:#000;">Passive radiator parameters</div><div class="b" style="left:1187px;top:383px;width:203px;height:20px;border-left:1px solid #fff;border-top:1px solid #fff;border-right:1px solid #a0a0a0;border-bottom:1px solid #a0a0a0"></div><div class="t" style="left:1250.2px;top:386.53px;font-size:13.2px;color:#000;transform:scaleX(1.0094);">User options</div><div class="t" style="left:927.4px;top:409.56px;font-size:13.4px;color:#000;">Vas</div><div class="b" style="left:927px;top:426px;width:81px;height:22px;background:#fff;border:1px solid #a59e8b"></div><div class="t" style="left:930px;top:430.50px;font-size:13px;color:#000;transform:scaleX(0.9300);">9,40</div><div class="t" style="left:1015.5px;top:436.66px;font-size:13.4px;color:#000;">l</div><div class="t" style="left:1051.4px;top:409.56px;font-size:13.4px;color:#000;">Qms</div><div class="b" style="left:1051px;top:426px;width:82px;height:22px;background:#fff;border:1px solid #a59e8b"></div><div class="t" style="left:1054px;top:430.50px;font-size:13px;color:#000;transform:scaleX(0.9300);">3,660</div><div class="t" style="left:1189.7px;top:409.56px;font-size:13.4px;color:#000;">Num. of PRs:</div><div class="b" style="left:1189px;top:426px;width:82px;height:22px;background:#fff;border:1px solid #a59e8b"></div><div class="t" style="left:1192px;top:430.50px;font-size:13px;color:#000;transform:scaleX(0.9300);">2</div><div class="t" style="left:927.4px;top:458.66px;font-size:13.4px;color:#000;">Fs</div><div class="b" style="left:927px;top:475px;width:81px;height:22px;background:#fff;border:1px solid #a59e8b"></div><div class="t" style="left:930px;top:479.50px;font-size:13px;color:#000;transform:scaleX(0.9300);">29,30</div><div class="t" style="left:1015.5px;top:486.26px;font-size:13.4px;color:#000;">Hz</div><div class="t" style="left:1051.6px;top:458.66px;font-size:13.4px;color:#000;">Sd</div><div class="b" style="left:1051px;top:475px;width:82px;height:22px;background:#fff;border:1px solid #a59e8b"></div><div class="t" style="left:1054px;top:479.50px;font-size:13px;color:#000;transform:scaleX(0.9300);">54,1</div><div class="t" style="left:1139.7px;top:486.26px;font-size:13.4px;color:#000;">cm^2</div><div class="t" style="left:1189.7px;top:458.66px;font-size:13.4px;color:#000;">Added mass to cone:</div><div class="b" style="left:1189px;top:475px;width:82px;height:22px;background:#fff;border:1px solid #a59e8b"></div><div class="t" style="left:1192px;top:479.50px;font-size:13px;color:#000;transform:scaleX(0.9300);">12,0</div><div class="t" style="left:1277.5px;top:486.26px;font-size:13.4px;color:#000;">g</div><div class="t" style="left:927.4px;top:507.66px;font-size:13.4px;color:#000;">Xmax</div><div class="b" style="left:927px;top:525px;width:81px;height:22px;background:#fff;border:1px solid #a59e8b"></div><div class="t" style="left:930px;top:529.50px;font-size:13px;color:#000;transform:scaleX(0.9300);">6,0</div><div class="t" style="left:1015.5px;top:535.66px;font-size:13.4px;color:#000;">mm</div><div class="b" style="left:1048px;top:506px;width:108px;height:87px;border:1px solid #e02020"></div><div class="t" style="left:1051.2px;top:507.66px;font-size:13.4px;color:#0000ff;">Volume:</div><div class="b" style="left:1051px;top:525px;width:81px;height:22px;background:#fff;border:1px solid #a59e8b"></div><div class="t" style="left:1054px;top:529.50px;font-size:13px;color:#000;transform:scaleX(0.9300);">2,80</div><div class="t" style="left:1139.7px;top:535.26px;font-size:13.4px;color:#000;">l</div><div class="t" style="left:1051.2px;top:551.36px;font-size:13.4px;color:#0000ff;">Tuning freq.:</div><div class="b" style="left:1051px;top:568px;width:81px;height:22px;background:#fff;border:1px solid #a59e8b"></div><div class="t" style="left:1054px;top:572.50px;font-size:13px;color:#8a8a8a;transform:scaleX(0.9300);">58,72</div><div class="t" style="left:1139px;top:578.96px;font-size:13.4px;color:#000;">Hz</div><div class="t" style="left:1189.7px;top:507.66px;font-size:13.4px;color:#000;">Fs (with added mass):</div><div class="b" style="left:1189px;top:525px;width:82px;height:22px;background:#fff;border:1px solid #a59e8b"></div><div class="t" style="left:1192px;top:529.50px;font-size:13px;color:#8a8a8a;transform:scaleX(0.9300);">21,14</div><div class="t" style="left:1277.5px;top:535.66px;font-size:13.4px;color:#000;">Hz</div><div class="t" style="left:1194.5px;top:565.09px;font-size:33.8px;color:#000;font-weight:700;transform:scaleX(0.9111);">DS115-PR</div><div class="b" style="left:916px;top:610px;width:488px;height:18px;background:#fff"></div><div class="b" style="left:1109px;top:611px;width:294px;height:15px;background:#c0c0c0;border-right:1px solid #a0a0a0;border-bottom:1px solid #a8a8a8"></div><div class="b" style="left:916px;top:611px;width:193px;height:15px;background:#f0f0f0;border-top:1px solid #fff;border-bottom:1px solid #a0a0a0;border-right:1px solid #a0a0a0"></div><div class="t" style="left:985px;top:613.29px;font-size:11px;color:#000;font-weight:700;font-family:'Liberation Serif', serif;transform:scaleX(1.0303);">Parameters</div><div class="b" style="left:915px;top:628px;width:490px;height:1px;background:#40d8f8"></div><div class="b" style="left:914px;top:629px;width:492px;height:1px;background:#111"></div><div class="b" style="left:1404px;top:322px;width:1px;height:307px;background:#60d0f0"></div><div class="b" style="left:1403px;top:349px;width:1px;height:279px;background:#d0def0"></div>
</body></html>
